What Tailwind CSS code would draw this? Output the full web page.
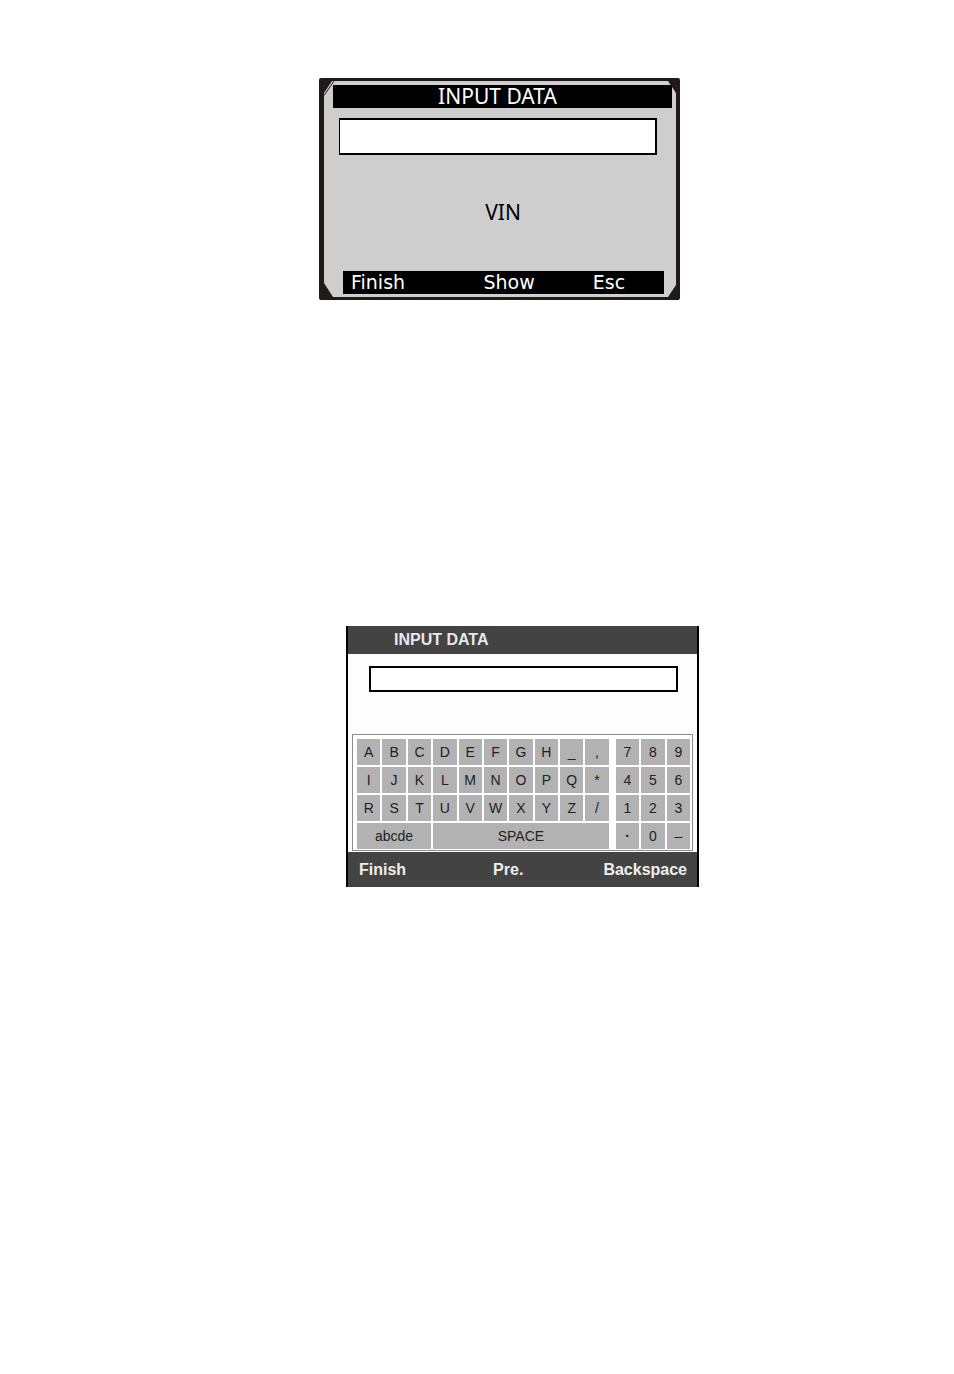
<!DOCTYPE html>
<html lang="en">
  <head>
    <meta charset="UTF-8" />
    <meta name="viewport" content="width=device-width, initial-scale=1.0" />
    <script src="https://cdn.jsdelivr.net/npm/@tailwindcss/browser@4"></script>
    <title>Input Data</title>
  </head>
  <body class="bg-white">
    <main class="flex flex-col pt-[78px] pb-20">
      <!-- VIN screen -->
      <div class="flex justify-center pl-[45px]">
        <form
          class="relative w-full max-w-[361px] rounded-[2px] border-t-[3px] border-r-4 border-b-[3px] border-l-[5px] border-[#211a18] bg-[#cecece] font-['Noto_Sans','DejaVu_Sans',sans-serif] text-[21px] leading-[23px]"
        >
          <svg class="absolute top-0 left-0 h-4 w-3" viewBox="0 0 12 16" aria-hidden="true">
            <path d="M0 0H8L0 12Z" fill="#211a18" />
            <path d="M0 14.500L10 0" stroke="#211a18" stroke-width="1" />
          </svg>
          <svg class="absolute top-0 right-0 h-3 w-2" viewBox="0 0 8 12" aria-hidden="true">
            <path d="M0 0H8V12Z" fill="#211a18" />
          </svg>
          <svg class="absolute bottom-0 left-0 h-[14px] w-[9px]" viewBox="0 0 9 14" aria-hidden="true">
            <path d="M0 0V14H9Z" fill="#211a18" />
          </svg>
          <svg class="absolute right-0 bottom-0 h-3 w-2" viewBox="0 0 8 12" aria-hidden="true">
            <path d="M0 12H8V0Z" fill="#211a18" />
          </svg>
          <h1 class="mt-1 mr-1 ml-[9px] bg-black pr-[10px] text-center text-white">INPUT DATA</h1>
          <div class="mt-[10px] mr-[19px] ml-[15px]">
            <input
              id="vin"
              type="text"
              class="block h-[37px] w-full border-2 border-l border-black bg-white px-2 outline-none"
            />
          </div>
          <label for="vin" class="mt-[46px] block pl-[6px] text-center text-black">VIN</label>
          <div
            class="mt-[47px] mr-3 mb-[3px] ml-[19px] grid grid-cols-[132fr_109fr_71fr] bg-black pl-2 font-['DejaVu_Sans',sans-serif] text-[19px] leading-[23px] text-white"
          >
            <button type="button" class="text-left">Finish</button>
            <button type="button" class="text-left">Show</button>
            <button type="button" class="text-left">Esc</button>
          </div>
        </form>
      </div>

      <!-- Keyboard screen -->
      <div class="mt-[326px] flex justify-center pl-[91px]">
        <form
          class="w-full max-w-[353px] border-x-2 border-black bg-[#fdfdfd] font-['Liberation_Sans',Arial,sans-serif]"
        >
          <h2 class="bg-[#434343] pl-[46px] text-base leading-7 font-bold text-[#e8e8e8]">INPUT DATA</h2>
          <div class="mt-3 mr-[19px] ml-[21px]">
            <input
              type="text"
              aria-label="Input data"
              class="block h-[26px] w-full border-2 border-black bg-white px-2 text-sm outline-none"
            />
          </div>
          <div
            class="mx-1 mt-[42px] mb-px flex gap-[7px] border border-[#8c8c8c] bg-white pt-1 pr-[2px] pb-px pl-1 text-sm leading-[26px] text-[#222]"
          >
            <div class="grid flex-[251] grid-cols-10 gap-[2px]">
              <button type="button" class="bg-[#b2b2b2]">A</button>
              <button type="button" class="bg-[#b2b2b2]">B</button>
              <button type="button" class="bg-[#b2b2b2]">C</button>
              <button type="button" class="bg-[#b2b2b2]">D</button>
              <button type="button" class="bg-[#b2b2b2]">E</button>
              <button type="button" class="bg-[#b2b2b2]">F</button>
              <button type="button" class="bg-[#b2b2b2]">G</button>
              <button type="button" class="bg-[#b2b2b2]">H</button>
              <button type="button" class="bg-[#b2b2b2]">_</button>
              <button type="button" class="bg-[#b2b2b2]">,</button>
              <button type="button" class="bg-[#b2b2b2]">I</button>
              <button type="button" class="bg-[#b2b2b2]">J</button>
              <button type="button" class="bg-[#b2b2b2]">K</button>
              <button type="button" class="bg-[#b2b2b2]">L</button>
              <button type="button" class="bg-[#b2b2b2]">M</button>
              <button type="button" class="bg-[#b2b2b2]">N</button>
              <button type="button" class="bg-[#b2b2b2]">O</button>
              <button type="button" class="bg-[#b2b2b2]">P</button>
              <button type="button" class="bg-[#b2b2b2]">Q</button>
              <button type="button" class="bg-[#b2b2b2]">*</button>
              <button type="button" class="bg-[#b2b2b2]">R</button>
              <button type="button" class="bg-[#b2b2b2]">S</button>
              <button type="button" class="bg-[#b2b2b2]">T</button>
              <button type="button" class="bg-[#b2b2b2]">U</button>
              <button type="button" class="bg-[#b2b2b2]">V</button>
              <button type="button" class="bg-[#b2b2b2]">W</button>
              <button type="button" class="bg-[#b2b2b2]">X</button>
              <button type="button" class="bg-[#b2b2b2]">Y</button>
              <button type="button" class="bg-[#b2b2b2]">Z</button>
              <button type="button" class="bg-[#b2b2b2]">/</button>
              <button type="button" class="col-span-3 bg-[#b2b2b2]">abcde</button>
              <button type="button" class="col-span-7 bg-[#b2b2b2]">SPACE</button>
            </div>
            <div class="grid flex-[74] grid-cols-3 gap-[2px]">
              <button type="button" class="bg-[#b2b2b2]">7</button>
              <button type="button" class="bg-[#b2b2b2]">8</button>
              <button type="button" class="bg-[#b2b2b2]">9</button>
              <button type="button" class="bg-[#b2b2b2]">4</button>
              <button type="button" class="bg-[#b2b2b2]">5</button>
              <button type="button" class="bg-[#b2b2b2]">6</button>
              <button type="button" class="bg-[#b2b2b2]">1</button>
              <button type="button" class="bg-[#b2b2b2]">2</button>
              <button type="button" class="bg-[#b2b2b2]">3</button>
              <button type="button" class="bg-[#b2b2b2] font-bold">·</button>
              <button type="button" class="bg-[#b2b2b2]">0</button>
              <button type="button" class="bg-[#b2b2b2]">–</button>
            </div>
          </div>
          <div
            class="grid grid-cols-[135fr_111fr_82fr] bg-[#434343] pr-[10px] pl-[11px] text-base leading-[35px] font-bold text-[#eee]"
          >
            <button type="button" class="text-left">Finish</button>
            <button type="button" class="text-left">Pre.</button>
            <button type="button" class="text-right">Backspace</button>
          </div>
        </form>
      </div>
    </main>
  </body>
</html>
